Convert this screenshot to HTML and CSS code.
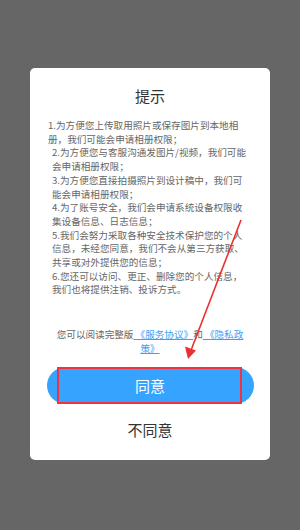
FILE: index.html
```html
<!DOCTYPE html>
<html lang="zh-CN">
<head>
<meta charset="utf-8">
<link rel="stylesheet" href="styles.css">
</head>
<body>
<div class="screen">
  <div class="dialog">
    <h1 class="title">提示</h1>
    <div class="terms">
      <p class="item">1.为方便您上传取用照片或保存图片到本地相<br>册，我们可能会申请相册权限；</p>
      <p class="item sub">2.为方便您与客服沟通发图片/视频，我们可能<br>会申请相册权限；</p>
      <p class="item sub">3.为方便您直接拍摄照片到设计稿中，我们可<br>能会申请相册权限；</p>
      <p class="item sub">4.为了账号安全，我们会申请系统设备权限收<br>集设备信息、日志信息；</p>
      <p class="item sub">5.我们会努力采取各种安全技术保护您的个人<br>信息，未经您同意，我们不会从第三方获取、<br>共享或对外提供您的信息；</p>
      <p class="item sub">6.您还可以访问、更正、删除您的个人信息，<br>我们也将提供注销、投诉方式。</p>
    </div>
    <p class="links">您可以阅读完整版<a class="link" href="#"> 《服务协议》</a>和<a class="link" href="#"> 《隐私政<br>策》</a></p>
    <div class="actions">
      <button class="agree" type="button">同意</button>
      <span class="highlight"></span>
    </div>
    <button class="disagree" type="button">不同意</button>
  </div>
  <svg class="arrow" width="300" height="530" viewBox="0 0 300 530">
    <line x1="241" y1="220" x2="191.5" y2="349" stroke="#ee2f2f" stroke-width="1.6"/>
    <polygon points="188,359 185,346.5 196,350.5" fill="#ee2f2f"/>
  </svg>
</div>
</body>
</html>
```
FILE: styles.css
```css
* { box-sizing: border-box; }
html, body {
  margin: 0;
  padding: 0;
  background: #666666;
}
body {
  font-family: "Noto Sans CJK SC", "Noto Sans", sans-serif;
}
.screen {
  position: relative;
  width: 300px;
  height: 530px;
  overflow: hidden;
  background: #666666;
  padding-top: 68px;
}
.dialog {
  width: 240px;
  margin: 0 auto;
  background: #ffffff;
  border-radius: 5px;
  padding: 18px 18px 20px 18px;
  display: flex;
  flex-direction: column;
  align-items: center;
}
.title {
  margin: 0;
  font-size: 15px;
  line-height: 20px;
  font-weight: normal;
  color: #333333;
}
.terms {
  align-self: stretch;
  margin-top: 13px;
  font-size: 9.6px;
  line-height: 13.7px;
  color: #666666;
  white-space: nowrap;
}
.item {
  margin: 0;
}
.item.sub {
  padding-left: 4px;
}
.links {
  margin: 31px 0 0 0;
  font-size: 9.6px;
  line-height: 13.4px;
  color: #666666;
  text-align: center;
}
.link {
  color: #3f9ef5;
  text-decoration: underline;
}
.actions {
  position: relative;
  margin-top: 12px;
  width: 207px;
  height: 37px;
}
.agree {
  width: 100%;
  height: 100%;
  border: none;
  border-radius: 19px;
  background: #36a4fe;
  color: #ffffff;
  font-family: inherit;
  font-size: 15px;
  padding: 0;
}
.highlight {
  position: absolute;
  left: 10px;
  top: 0;
  width: 185px;
  height: 37px;
  border: 2px solid #ef3340;
}
.disagree {
  margin-top: 16px;
  border: none;
  background: none;
  padding: 0;
  font-family: inherit;
  font-size: 15px;
  line-height: 20px;
  color: #333333;
}
.arrow {
  position: absolute;
  left: 0;
  top: 0;
  pointer-events: none;
}
```
